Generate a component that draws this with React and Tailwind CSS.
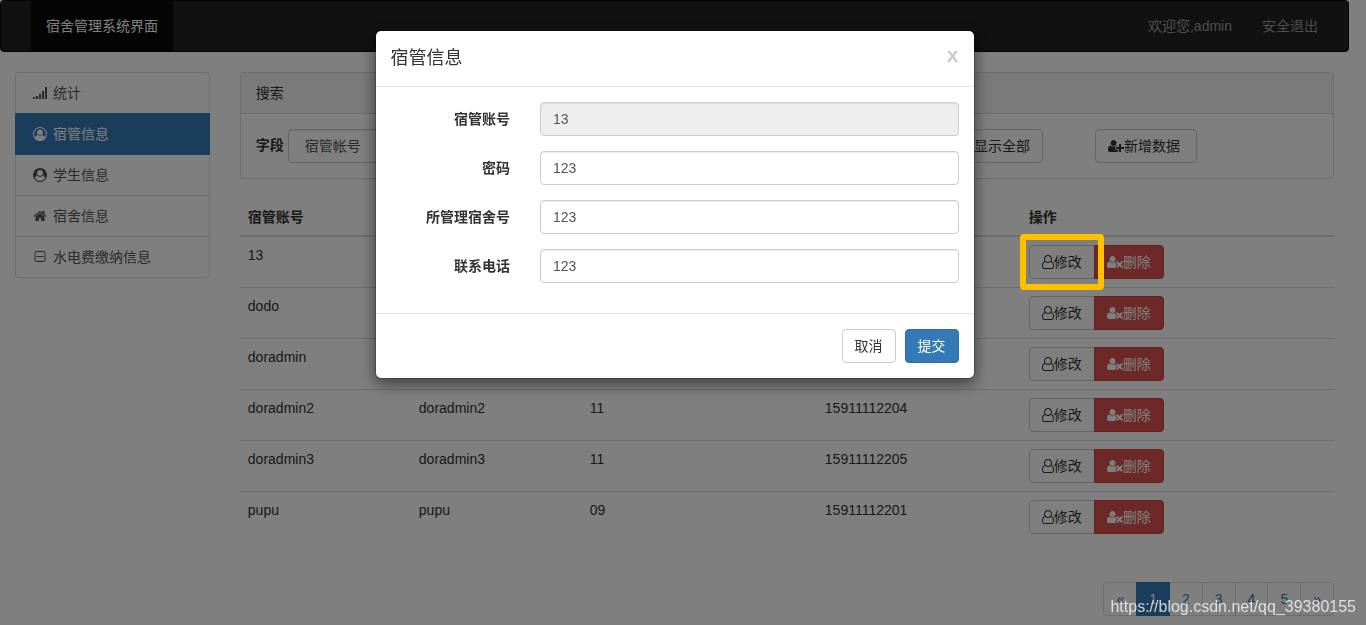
import React, { useState } from "react";

const PERSON =
  "M704 896q-159 0-271.5-112.5t-112.5-271.5 112.5-271.5 271.5-112.5 271.5 112.5 112.5 271.5-112.5 271.5-271.5 112.5z";

const icons = {
  signal: {
    box: "0 0 1792 1792",
    d: "M256 1440v192q0 14-9 23t-23 9h-192q-14 0-23-9t-9-23v-192q0-14 9-23t23-9h192q14 0 23 9t9 23zm384-128v320q0 14-9 23t-23 9h-192q-14 0-23-9t-9-23v-320q0-14 9-23t23-9h192q14 0 23 9t9 23zm384-256v576q0 14-9 23t-23 9h-192q-14 0-23-9t-9-23v-576q0-14 9-23t23-9h192q14 0 23 9t9 23zm384-384v960q0 14-9 23t-23 9h-192q-14 0-23-9t-9-23v-960q0-14 9-23t23-9h192q14 0 23 9t9 23zm384-512v1472q0 14-9 23t-23 9h-192q-14 0-23-9t-9-23v-1472q0-14 9-23t23-9h192q14 0 23 9t9 23z",
  },
  userCircleOutline: {
    box: "0 0 1792 1792",
    d: "M896 0q182 0 348 71t286 191 191 286 71 348q0 181-70.5 347t-190.5 286-286 191.5-349 71.5-349-71-285.5-191.5-190.5-286-71-347.5 71-348 191-286 286-191 348-71zm619 1351q149-205 149-455 0-156-61-298t-164-245-245-164-298-61-298 61-245 164-164 245-61 298q0 250 149 455 66-327 306-327 131 128 313 128t313-128q240 0 306 327zm-235-647q0-159-112.5-271.5t-271.5-112.5-271.5 112.5-112.5 271.5 112.5 271.5 271.5 112.5 271.5-112.5 112.5-271.5z",
  },
  userCircle: {
    box: "0 0 1792 1792",
    d: "M1523 1339q-22-155-87.5-257.5t-184.5-118.5q-67 74-159.5 115.5t-195.5 41.5-195.5-41.5-159.5-115.5q-119 16-184.5 118.5t-87.5 257.5q106 150 271 237.5t356 87.5 356-87.5 271-237.5zm-243-699q0-159-112.5-271.5t-271.5-112.5-271.5 112.5-112.5 271.5 112.5 271.5 271.5 112.5 271.5-112.5 112.5-271.5zm512 256q0 182-71 347.5t-190.5 286-285.5 191.5-349 71q-182 0-348-71t-286-191-191-286-71-348 71-348 191-286 286-191 348-71 348 71 286 191 191 286 71 348z",
  },
  home: {
    box: "0 0 1792 1792",
    d: "M1472 992v480q0 26-19 45t-45 19h-384v-384h-256v384h-384q-26 0-45-19t-19-45v-480q0-1 .5-3t.5-3l575-474 575 474q1 2 1 6zm223-69l-62 74q-8 9-21 11h-3q-13 0-21-7l-692-577-692 577q-12 8-24 7-13-2-21-11l-62-74q-8-10-7-23.5t11-21.5l719-599q32-26 76-26t76 26l244 204v-195q0-14 9-23t23-9h192q14 0 23 9t9 23v408l219 182q10 8 11 21.5t-7 23.5z",
  },
  minusSquare: {
    box: "0 0 1792 1792",
    d: "M1344 800v64q0 14-9 23t-23 9h-832q-14 0-23-9t-9-23v-64q0-14 9-23t23-9h832q14 0 23 9t9 23zm128 448v-832q0-66-47-113t-113-47h-832q-66 0-113 47t-47 113v832q0 66 47 113t113 47h832q66 0 113-47t47-113zm128-832v832q0 119-84.5 203.5t-203.5 84.5h-832q-119 0-203.5-84.5t-84.5-203.5v-832q0-119 84.5-203.5t203.5-84.5h832q119 0 203.5 84.5t84.5 203.5z",
  },
  userPlus: {
    box: "0 0 2048 1792",
    d:
      PERSON +
      "m960 128h352q13 0 22.5 9.5t9.5 22.5v192q0 13-9.5 22.5t-22.5 9.5h-352v352q0 13-9.5 22.5t-22.5 9.5h-192q-13 0-22.5-9.5t-9.5-22.5v-352h-352q-13 0-22.5-9.5t-9.5-22.5v-192q0-13 9.5-22.5t22.5-9.5h352v-352q0-13 9.5-22.5t22.5-9.5h192q13 0 22.5 9.5t9.5 22.5v352zm-736 224q0 52 38 90t90 38h256v238q-68 50-171 50h-874q-121 0-194-69t-73-190q0-53 3.5-103.5t14-109 26.5-108.5 43-97.5 62-81 85.5-53.5 111.5-20q19 0 39 17 79 61 154.5 91.5t164.5 30.5 164.5-30.5 154.5-91.5q20-17 39-17 132 0 217 96h-223q-52 0-90 38t-38 90v192z",
  },
  userTimes: {
    box: "0 0 2048 1792",
    d:
      PERSON +
      "m1077 320l249 249q9 9 9 23 0 13-9 22l-136 136q-9 9-22 9-14 0-23-9l-249-249-249 249q-9 9-23 9-13 0-22-9l-136-136q-9-9-9-22 0-14 9-23l249-249-249-249q-9-9-9-23 0-13 9-22l136-136q9-9 22-9 14 0 23 9l249 249 249-249q9-9 23-9 13 0 22 9l136 136q9 9 9 22 0 14-9 23zm-498 0l-181 181q-37 37-37 91 0 53 37 90l83 83q-21 3-44 3h-874q-121 0-194-69t-73-190q0-53 3.5-103.5t14-109 26.5-108.5 43-97.5 62-81 85.5-53.5 111.5-20q19 0 39 17 154 122 319 122t319-122q20-17 39-17 28 0 57 6-28 27-41 50t-13 56q0 54 37 91z",
  },
  user: {
    box: "0 0 1536 1792",
    d: "M1201 784q47 14 89.5 38t89 73 79.5 115.5 55 172 22 236.5q0 154-100 263.5t-241 109.5h-854q-141 0-241-109.5t-100-263.5q0-131 22-236.5t55-172 79.5-115.5 89-73 89.5-38q-79-125-79-272 0-104 40.5-198.5t109.5-163.5 163.5-109.5 198.5-40.5 198.5 40.5 163.5 109.5 109.5 163.5 40.5 198.5q0 147-79 272zm-433-656q-159 0-271.5 112.5t-112.5 271.5 112.5 271.5 271.5 112.5 271.5-112.5 112.5-271.5-112.5-271.5-271.5-112.5zm427 1536q88 0 150.5-71.5t62.5-173.5q0-239-78.5-377t-225.5-145q-145 127-336 127t-336-127q-147 7-225.5 145t-78.5 377q0 102 62.5 173.5t150.5 71.5h854z",
  },
};

const Icon = ({ name, className }) => (
  <svg viewBox={icons[name].box} className={className} fill="currentColor" aria-hidden="true">
    <path d={icons[name].d} />
  </svg>
);

const menu = [
  { icon: "signal", label: "统计" },
  { icon: "userCircleOutline", label: "宿管信息", active: true },
  { icon: "userCircle", label: "学生信息" },
  { icon: "home", label: "宿舍信息" },
  { icon: "minusSquare", label: "水电费缴纳信息" },
];

const rows = [
  ["13", "123", "123", "123"],
  ["dodo", "", "", ""],
  ["doradmin", "", "", ""],
  ["doradmin2", "doradmin2", "11", "15911112204"],
  ["doradmin3", "doradmin3", "11", "15911112205"],
  ["pupu", "pupu", "09", "15911112201"],
];

const fields = [
  { id: "account", label: "宿管账号", value: "13", readOnly: true },
  { id: "password", label: "密码", value: "123" },
  { id: "dorm", label: "所管理宿舍号", value: "123" },
  { id: "phone", label: "联系电话", value: "123" },
];

const Navbar = () => (
  <nav className="flex justify-between bg-[#222] border border-[#080808] rounded px-[15px] mb-5">
    <a href="#" className="ml-[15px] px-[15px] py-[15px] bg-[#080808] text-white">
      宿舍管理系统界面
    </a>
    <div className="flex text-[#9d9d9d]">
      <a href="#" className="p-[15px]">欢迎您,admin</a>
      <a href="#" className="p-[15px]">安全退出</a>
    </div>
  </nav>
);

const Sidebar = () => (
  <div className="flex flex-col">
    {menu.map((item) => (
      <a
        key={item.label}
        href="#"
        className={`flex items-center gap-1 border px-[15px] py-2.5 -mb-px first:rounded-t last:rounded-b ${
          item.active
            ? "relative bg-[#337ab7] border-[#337ab7] text-white"
            : "bg-white border-[#ddd] text-[#555]"
        }`}
      >
        <span className="w-[18px] flex justify-center">
          <Icon name={item.icon} className="w-3.5 h-3.5" />
        </span>
        {item.label}
      </a>
    ))}
  </div>
);

const SearchPanel = () => (
  <div className="border border-[#ddd] rounded shadow-[0_1px_1px_rgba(0,0,0,0.05)] mb-5">
    <div className="bg-[#f5f5f5] border-b border-[#ddd] rounded-t px-[15px] py-2.5">搜索</div>
    <form className="flex justify-between p-[15px] pr-[136px]">
      <div className="flex gap-1">
        <label htmlFor="field" className="font-bold pt-1.5">字段</label>
        <select
          id="field"
          className="appearance-none w-40 h-[34px] px-4 bg-white border border-[#ccc] rounded text-[#555] shadow-[inset_0_1px_1px_rgba(0,0,0,0.075)]"
        >
          <option>宿管帐号</option>
        </select>
      </div>
      <div className="flex gap-[52px]">
        <button type="button" className="border border-[#ccc] rounded px-3 py-1.5">
          显示全部
        </button>
        <button type="button" className="flex items-center border border-[#ccc] rounded pl-3 pr-4 py-1.5">
          <Icon name="userPlus" className="w-4 h-3.5" />
          新增数据
        </button>
      </div>
    </form>
  </div>
);

const UserTable = () => (
  <table className="w-full table-fixed border-collapse mb-5">
    <thead>
      <tr className="text-left border-b-2 border-[#ddd]">
        <th className="w-[171px] p-2">宿管账号</th>
        <th className="w-[171px] p-2">密码</th>
        <th className="w-[235px] p-2">所管理宿舍号</th>
        <th className="w-[204px] p-2">联系电话</th>
        <th className="p-2">操作</th>
      </tr>
    </thead>
    <tbody>
      {rows.map((row, i) => (
        <tr key={row[0]} className="align-top border-t border-[#ddd]">
          {row.map((cell, j) => (
            <td key={j} className="p-2">{cell}</td>
          ))}
          <td className="p-2">
            <div className="relative flex w-max">
              <button type="button" className="flex items-center border border-[#ccc] rounded-l px-3 py-1.5">
                <Icon name="user" className="w-3 h-3.5" />
                修改
              </button>
              <button
                type="button"
                className="flex items-center -ml-px bg-[#d9534f] border border-[#d43f3a] rounded-r px-3 py-1.5 text-white"
              >
                <Icon name="userTimes" className="w-4 h-3.5" />
                删除
              </button>
              {/* highlight around the edit button */}
              {i === 0 && (
                <span className="absolute -left-[9px] -top-[11px] z-50 w-[84px] h-14 border-6 border-[#ffc000] rounded pointer-events-none" />
              )}
            </div>
          </td>
        </tr>
      ))}
    </tbody>
  </table>
);

const Pagination = () => (
  <nav className="flex justify-end pt-5">
    {["«", "1", "2", "3", "4", "5", "»"].map((page) => (
      <a
        key={page}
        href="#"
        className={`border px-3 py-1.5 -ml-px first:rounded-l last:rounded-r ${
          page === "1"
            ? "relative bg-[#337ab7] border-[#337ab7] text-white"
            : "border-[#ddd] text-[#337ab7]"
        }`}
      >
        {page}
      </a>
    ))}
  </nav>
);

const EditModal = ({ onClose }) => (
  <div className="fixed inset-0 z-40 bg-black/50 pr-[17px] overflow-hidden">
    <div
      role="dialog"
      aria-labelledby="modal-title"
      className="max-w-[600px] mx-auto mt-[30px] bg-white bg-clip-padding border border-black/20 rounded-md shadow-[0_5px_15px_rgba(0,0,0,0.5)]"
    >
      <div className="flex items-start justify-between p-[15px] border-b border-[#e5e5e5]">
        <h4 id="modal-title" className="text-[18px] leading-[25px]">宿管信息</h4>
        <button
          type="button"
          onClick={onClose}
          className="-mt-0.5 text-[21px] leading-[21px] font-bold text-[#ccc]"
        >
          x
        </button>
      </div>

      <form>
        <div className="flex flex-col gap-[15px] pt-[15px] pb-[30px]">
          {fields.map((field) => (
            <div key={field.id} className="flex">
              <label htmlFor={field.id} className="w-1/4 px-[15px] pt-[7px] text-right font-bold">
                {field.label}
              </label>
              <div className="w-3/4 px-[15px]">
                <input
                  id={field.id}
                  type="text"
                  defaultValue={field.value}
                  readOnly={field.readOnly}
                  className="block w-full h-[34px] px-3 py-1.5 border border-[#ccc] rounded text-[#555] bg-white read-only:bg-[#eee] shadow-[inset_0_1px_1px_rgba(0,0,0,0.075)]"
                />
              </div>
            </div>
          ))}
        </div>
        <div className="flex justify-end gap-[9px] p-[15px] border-t border-[#e5e5e5]">
          <button type="button" onClick={onClose} className="border border-[#ccc] rounded px-3 py-1.5">
            取消
          </button>
          <button
            type="button"
            className="bg-[#337ab7] border border-[#2e6da4] rounded px-3 py-1.5 text-white"
          >
            提交
          </button>
        </div>
      </form>
    </div>
  </div>
);

export default function App() {
  const [showModal, setShowModal] = useState(true);

  return (
    <div className="min-h-screen bg-white pr-[17px] font-['Liberation_Sans','Noto_Sans_CJK_SC',sans-serif] text-[14px] leading-5 text-[#333]">
      <Navbar />
      <div className="flex">
        <div className="w-1/6 px-[15px]">
          <Sidebar />
        </div>
        <div className="w-5/6 px-[15px]">
          <SearchPanel />
          <UserTable />
          <Pagination />
        </div>
      </div>
      {showModal && <EditModal onClose={() => setShowModal(false)} />}

      {/* watermark */}
      <span className="fixed right-2.5 bottom-2 z-50 text-[16px] leading-5 text-white/75 pointer-events-none">
        https://blog.csdn.net/qq_39380155
      </span>
    </div>
  );
}
